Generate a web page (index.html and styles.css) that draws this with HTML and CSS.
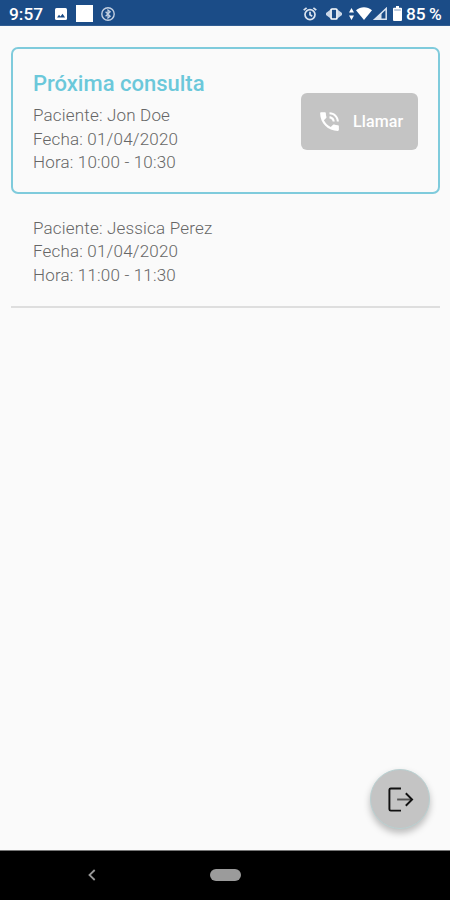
FILE: index.html
```
<!DOCTYPE html>
<html lang="es">
<head>
    <meta charset="UTF-8">
    <meta name="viewport" content="width=device-width, initial-scale=1">
    <title>Consultas</title>
    <link rel="stylesheet" href="styles.css">
</head>
<body>

    <header class="status-bar">
        <span class="clock">9:57</span>
        <svg class="icon-image" width="12" height="12" viewBox="0 0 12 12"><rect width="12" height="12" rx="1.5" fill="#fff"/><path d="M2 9.5l2-2.7 1.5 1.6 2-2.7 2.6 3.8z" fill="#1b4c87"/></svg>
        <span class="square"></span>
        <svg class="icon-circle" width="14" height="14" viewBox="0 0 14 14" fill="none" stroke="#c3d0e2"><circle cx="7" cy="7" r="6.2" stroke-width="1.4"/><path d="M4.6 4.8l4.6 4.4L7 11V3l2.2 1.8-4.6 4.4" stroke-width="1.2"/></svg>

        <div class="status-right">
            <svg class="icon-alarm" width="14" height="14" viewBox="0 0 14 14" fill="none" stroke="#dbe4f0" stroke-width="1.7"><circle cx="7" cy="7.6" r="5"/><path d="M.7 3.2L3.6.8M13.3 3.2L10.4.8M7 4.8v3l2.2 1.4"/></svg>
            <svg class="icon-vibrate" width="16" height="12" viewBox="0 0 16 12"><path d="M4 2v8L0 7V5zM12 2v8l4-3V5z" fill="#c9d6e7"/><rect x="5" y="1" width="6" height="10" rx="1" fill="#1b4c87" stroke="#fff" stroke-width="1.7"/></svg>
            <svg class="icon-data" width="5" height="12" viewBox="0 0 5 12"><path d="M2.5 0L5 4.5H0zM2.5 12L5 7.5H0z" fill="#fff"/></svg>
            <svg class="icon-wifi" width="16" height="13" viewBox="0 0 16 13"><path d="M0 3.2C4.6-.7 11.4-.7 16 3.2L8 13z" fill="#fff"/></svg>
            <svg class="icon-signal" width="14" height="13" viewBox="0 0 14 13"><path d="M1.8 12.2L13.2 1.5v10.7z" fill="none" stroke="#dbe4f0" stroke-width="1.5"/><path d="M1 12.5L8.5 5.5v7z" fill="#dbe4f0"/></svg>
            <svg class="icon-battery" width="9" height="15" viewBox="0 0 9 15"><path d="M3 0h3v1.8h2q1 0 1 1V14q0 1-1 1H1q-1 0-1-1V2.8q0-1 1-1h2z" fill="#fff"/><path d="M1.2 4h6.6" stroke="#7f9abf"/></svg>
            <span class="percent">85 %</span>
        </div>
    </header>

    <main class="content">
        <section class="card">
            <div class="info">
                <h1>Próxima consulta</h1>
                <p>Paciente: Jon Doe</p>
                <p>Fecha: 01/04/2020</p>
                <p>Hora: 10:00 - 10:30</p>
            </div>
            <button type="button" class="call">
                <svg width="25" height="25" viewBox="0 0 24 24" fill="#fff"><path d="M20 15.5c-1.25 0-2.45-.2-3.57-.57-.35-.11-.74-.03-1.02.24l-2.2 2.2c-2.83-1.44-5.15-3.75-6.59-6.59l2.2-2.21c.28-.26.36-.65.25-1C8.7 6.45 8.5 5.25 8.5 4c0-.55-.45-1-1-1H4c-.55 0-1 .45-1 1 0 9.39 7.61 17 17 17 .55 0 1-.45 1-1v-3.5c0-.55-.45-1-1-1zM19 12h2c0-4.97-4.03-9-9-9v2c3.87 0 7 3.13 7 7zm-4 0h2c0-2.76-2.24-5-5-5v2c1.66 0 3 1.34 3 3z"/></svg>
                <span>Llamar</span>
            </button>
        </section>

        <section class="item">
            <p>Paciente: Jessica Perez</p>
            <p>Fecha: 01/04/2020</p>
            <p>Hora: 11:00 - 11:30</p>
        </section>
    </main>

    <button type="button" class="logout" aria-label="Salir">
        <svg width="27" height="27" viewBox="0 0 28 28" fill="none" stroke="#111" stroke-width="2"><path d="M14.5 2.5H4q-1.5 0-1.5 1.5v20q0 1.5 1.5 1.5h10.5"/><path d="M10.5 14H25" stroke="#555"/><path d="M19.5 7.5L26 14l-6.5 6.5"/></svg>
    </button>

    <footer class="nav-bar">
        <svg class="back" width="8" height="12" viewBox="0 0 8 12"><path d="M6.7 1L1.5 6l5.2 5" fill="none" stroke="#999" stroke-width="1.8"/></svg>
        <span class="home"></span>
    </footer>

</body>
</html>
```
FILE: styles.css
```
* {
    box-sizing: border-box;
}
body {
    margin: 0;
    height: 900px;
    display: flex;
    flex-direction: column;
    font-family: Roboto, sans-serif;
    background-color: #fafafa;
    color: #666;
    overflow: hidden;
    white-space: nowrap;
}
.status-bar {
    height: 26px;
    display: flex;
    align-items: center;
    padding: 2px 8px 0 9px;
    background-color: #1b4c87;
    border-bottom: 1px solid #315d92;
    color: #fff;
    font-size: 17.3px;
    font-weight: 500;
}
.status-bar svg {
    flex: none;
}
.clock {
    width: 46px;
}
.square {
    width: 17px;
    height: 17px;
    margin: 0 8px 0 9px;
    background: #fff;
}
.status-right {
    display: flex;
    align-items: center;
    margin-left: auto;
}
.icon-vibrate {
    margin: 0 7px 0 9px;
}
.icon-wifi {
    margin: 0 1px 0 2px;
}
.icon-battery {
    margin: 0 4px 0 6px;
}
.percent {
    width: 36px;
    word-spacing: -1px;
}
.content {
    flex: 1;
    padding: 21px 10px 0 11px;
}
.card {
    height: 147px;
    display: flex;
    justify-content: space-between;
    align-items: center;
    padding: 0 20px;
    border: 2px solid #7fcbdc;
    border-radius: 7px;
}
.info {
    padding-top: 5px;
}
h1 {
    margin: 0 0 7px;
    font-size: 22px;
    line-height: 26px;
    font-weight: 500;
    color: #6bc8da;
}
p {
    margin: 0;
    font-size: 17px;
    line-height: 23.4px;
    font-weight: 300;
    letter-spacing: 0.18px;
}
.call {
    width: 117px;
    height: 57px;
    display: flex;
    align-items: center;
    margin-top: 2px;
    padding: 0 0 0 16px;
    border: none;
    border-radius: 6px;
    background-color: #c4c4c4;
    color: #fff;
    font: 500 16px Roboto, sans-serif;
    letter-spacing: 0.1px;
}
.call span {
    margin-left: 11px;
}
.item {
    height: 114px;
    padding: 23px 22px 0;
    border-bottom: 2px solid #dedede;
}
.logout {
    position: absolute;
    right: 20px;
    top: 769px;
    width: 60px;
    height: 60px;
    display: flex;
    align-items: center;
    justify-content: center;
    padding: 0;
    border: 1px solid #b9d0d1;
    border-radius: 50%;
    background-color: #c4c4c4;
    box-shadow: 0 4px 7px rgba(0, 0, 0, 0.25);
}
.nav-bar {
    height: 50px;
    display: flex;
    align-items: center;
    padding-left: 88px;
    background: #000;
    border-top: 1px solid #777;
}
.back {
    margin-top: -2px;
}
.home {
    width: 31px;
    height: 12px;
    margin: -2px 0 0 114px;
    border-radius: 6px;
    background: #9b9b9b;
}
```
